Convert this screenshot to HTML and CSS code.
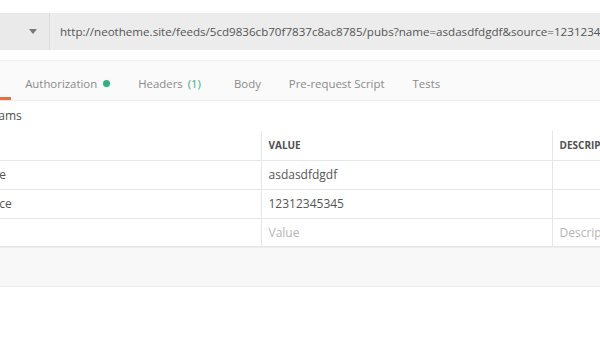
FILE: index.html
```html
<!DOCTYPE html>
<html lang="en">

<head>
  <meta charset="UTF-8">
  <meta name="viewport" content="width=device-width, initial-scale=1.0">
  <title>request</title>
  <link rel="stylesheet" href="styles.css">
</head>

<body>
  <div class="page">
    <div class="url_bar">
      <div class="method">
        <span class="method_name">GET</span>
        <span class="arrow"></span>
      </div>
      <div class="url">http://neotheme.site/feeds/5cd9836cb70f7837c8ac8785/pubs?name=asdasdfdgdf&amp;source=12312345345</div>
    </div>

    <div class="tabs">
      <div class="tab active">Params</div>
      <div class="tab">Authorization <span class="dot"></span></div>
      <div class="tab">Headers <span class="count">(1)</span></div>
      <div class="tab">Body</div>
      <div class="tab">Pre-request Script</div>
      <div class="tab">Tests</div>
    </div>

    <div class="params_title">Query Params</div>

    <table class="params">
      <tr>
        <th class="key_col">KEY</th>
        <th class="value_col">VALUE</th>
        <th class="desc_col">DESCRIPTION</th>
      </tr>
      <tr>
        <td>name</td>
        <td>asdasdfdgdf</td>
        <td></td>
      </tr>
      <tr>
        <td>source</td>
        <td>12312345345</td>
        <td></td>
      </tr>
      <tr class="last_row">
        <td class="placeholder">Key</td>
        <td class="placeholder">Value</td>
        <td class="placeholder">Description</td>
      </tr>
    </table>

    <div class="footer_bar"></div>
  </div>
</body>

</html>
```

FILE: styles.css
```css
body {
  margin: 0;
  background-color: #fff;
  font-family: "Open Sans", "Liberation Sans", sans-serif;
  font-size: 12px;
  color: #505050;
  overflow: hidden;
}

.page {
  margin-left: -60px;
  width: 900px;
}

.url_bar {
  margin-top: 13px;
  height: 37px;
  display: flex;
  background-color: #ececec;
}

.method {
  width: 110px;
  flex-shrink: 0;
  border-right: 1px solid #dadada;
  display: flex;
  align-items: center;
  justify-content: space-between;
  padding: 0 12px 0 14px;
  box-sizing: border-box;
  background-color: #eaeaea;
}

.method_name {
  visibility: hidden;
}

.arrow {
  width: 0;
  height: 0;
  border-left: 4px solid transparent;
  border-right: 4px solid transparent;
  border-top: 5px solid #777;
}

.url {
  padding-left: 10px;
  line-height: 38px;
  white-space: nowrap;
  color: #555;
  font-size: 11.6px;
}

.tabs {
  margin-top: 10px;
  height: 39px;
  display: flex;
  padding-left: 3px;
  background-color: #fafafa;
  border-top: 1px solid #f0f0f0;
  border-bottom: 1px solid #ececec;
}

.tab {
  padding: 10px 14px 0;
  line-height: 26px;
  font-size: 11.4px;
  color: #8a8a8a;
  border-bottom: 3px solid transparent;
  white-space: nowrap;
}

.tab.active {
  border-bottom-color: #f26b3a;
  color: #333;
}

.dot {
  display: inline-block;
  width: 7px;
  height: 7px;
  margin-left: 3px;
  border-radius: 50%;
  background-color: #26b47f;
  vertical-align: 1px;
}

.count {
  color: #26b47f;
  margin: 0 5px 0 2px;
}

.params_title {
  padding-left: 2px;
  height: 30px;
  line-height: 30px;
  color: #505050;
}

.params {
  margin-left: 20px;
  border-collapse: collapse;
  table-layout: fixed;
  width: 792px;
}

.params th,
.params td {
  box-sizing: border-box;
  border: 1px solid #e6e6e6;
  padding: 0 7px;
  text-align: left;
  height: 29px;
  white-space: nowrap;
  overflow: hidden;
  color: #555;
}

.params tr:first-child th {
  border-top: none;
}

.params th:first-child,
.params td:first-child {
  border-left: none;
  padding-left: 14px;
}

.params th {
  font-size: 10px;
  font-weight: bold;
  color: #505050;
}

.params .last_row td {
  height: 28px;
}

.key_col {
  width: 301px;
}

.value_col {
  width: 291px;
}

.desc_col {
  width: 200px;
}

.params .placeholder {
  color: #b5b5b5;
}

.footer_bar {
  height: 38px;
  background-color: #f8f8f8;
  border-top: 1px solid #ececec;
  border-bottom: 1px solid #ececec;
}
```
